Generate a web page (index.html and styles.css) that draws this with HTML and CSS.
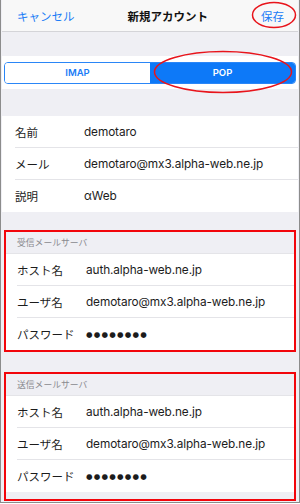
FILE: index.html
```html
<!DOCTYPE html>
<html lang="ja">
<head>
    <meta charset="UTF-8">
    <meta name="viewport" content="width=device-width, initial-scale=1.0">
    <title>新規アカウント</title>
    <link rel="stylesheet" href="styles.css">
</head>
<body>

<div class="screen">
    <div class="navbar">
        <span class="nav-button">キャンセル</span>
        <span class="nav-title">新規アカウント</span>
        <span class="nav-button save">保存</span>
    </div>

    <div class="segment-band">
        <div class="segment">
            <span class="segment-item">IMAP</span>
            <span class="segment-item active">POP</span>
        </div>
    </div>

    <div class="group">
        <div class="row"><span class="label">名前</span><span class="value">demotaro</span></div>
        <div class="row"><span class="label">メール</span><span class="value">demotaro@mx3.alpha-web.ne.jp</span></div>
        <div class="row"><span class="label">説明</span><span class="value">αWeb</span></div>
    </div>

    <div class="marked first">
        <div class="group-header">受信メールサーバ</div>
        <div class="group">
            <div class="row"><span class="label">ホスト名</span><span class="value">auth.alpha-web.ne.jp</span></div>
            <div class="row"><span class="label">ユーザ名</span><span class="value">demotaro@mx3.alpha-web.ne.jp</span></div>
            <div class="row"><span class="label">パスワード</span><span class="value dots">●●●●●●●●</span></div>
        </div>
    </div>

    <div class="marked second">
        <div class="group-header">送信メールサーバ</div>
        <div class="group">
            <div class="row"><span class="label">ホスト名</span><span class="value">auth.alpha-web.ne.jp</span></div>
            <div class="row"><span class="label">ユーザ名</span><span class="value">demotaro@mx3.alpha-web.ne.jp</span></div>
            <div class="row"><span class="label">パスワード</span><span class="value dots">●●●●●●●●</span></div>
        </div>
    </div>

    <!-- red marks drawn over the screenshot -->
    <svg class="mark mark-save" width="46" height="30" viewBox="0 0 46 30">
        <ellipse cx="23" cy="15" rx="21.5" ry="12.5" fill="none" stroke="#e8141b" stroke-width="1.5"/>
    </svg>
    <svg class="mark mark-pop" width="142" height="46" viewBox="0 0 142 46">
        <ellipse cx="71" cy="23" rx="68.5" ry="20.5" fill="none" stroke="#e8141b" stroke-width="1.5"/>
    </svg>
</div>

</body>
</html>
```

FILE: styles.css
```css
body {
    margin: 0;
    padding: 0;
    font-family: Inter, "Noto Sans CJK JP", sans-serif;
    background: #ffffff;
}

.screen {
    position: relative;
    width: 296px;
    height: 502px;
    background: #efeff4;
    border: 1px solid #8c8c8c;
    border-top: none;
    padding: 0 1px;
    overflow: hidden;
}

.navbar {
    height: 31px;
    display: flex;
    align-items: center;
    justify-content: space-between;
    padding: 0 14px 0 15px;
    background: #f8f8f8;
    border-bottom: 1px solid #d4d4d8;
    font-family: "Noto Sans CJK JP", sans-serif;
    font-size: 11.5px;
}

.nav-button {
    color: #1a7cf6;
}

.nav-title {
    font-weight: bold;
    color: #111;
}

.segment-band {
    margin-top: 24px;
    height: 33px;
    background: #fff;
    display: flex;
    align-items: center;
    padding: 0 2px;
}

.segment {
    flex: 1;
    height: 20px;
    display: flex;
    border: 1px solid #2a86f7;
    border-radius: 4px;
    overflow: hidden;
    font-family: Inter, sans-serif;
    font-size: 9.5px;
    font-weight: 600;
}

.segment-item {
    flex: 1;
    display: flex;
    align-items: center;
    justify-content: center;
    color: #1a7cf6;
    background: #fff;
}

.segment-item.active {
    background: #0d79f8;
    color: #fff;
}

.group {
    background: #fff;
    margin-top: 27px;
}

.row {
    height: 32px;
    display: flex;
    align-items: center;
    margin-left: 13px;
    border-bottom: 1px solid #e4e4e8;
    box-sizing: border-box;
}

.row:last-child {
    border-bottom: none;
}

.label {
    width: 69px;
    font-family: "Noto Sans CJK JP", sans-serif;
    font-size: 11.5px;
    color: #1c1c1c;
}

.value {
    font-size: 11.8px;
    color: #1c1c1c;
    letter-spacing: -0.1px;
}

.dots {
    font-family: "DejaVu Sans", sans-serif;
    font-size: 7.5px;
    letter-spacing: 1.2px;
}

.marked {
    margin: 0 2px;
    border: 2px solid #f2050b;
}

.marked.first {
    margin-top: 18px;
}

.marked.second {
    margin-top: 20px;
    padding-bottom: 7px;
}

.marked .group {
    margin-top: 0;
}

.marked .row {
    margin-left: 11px;
}

.group-header {
    height: 21px;
    display: flex;
    align-items: center;
    padding-left: 11px;
    font-family: "Noto Sans CJK JP", sans-serif;
    font-size: 8.8px;
    color: #8a8a8f;
    border-bottom: 1px solid #e4e4e8;
}

.mark {
    position: absolute;
}

.mark-save {
    left: 250px;
    top: 0;
}

.mark-pop {
    left: 151px;
    top: 49px;
}
```
